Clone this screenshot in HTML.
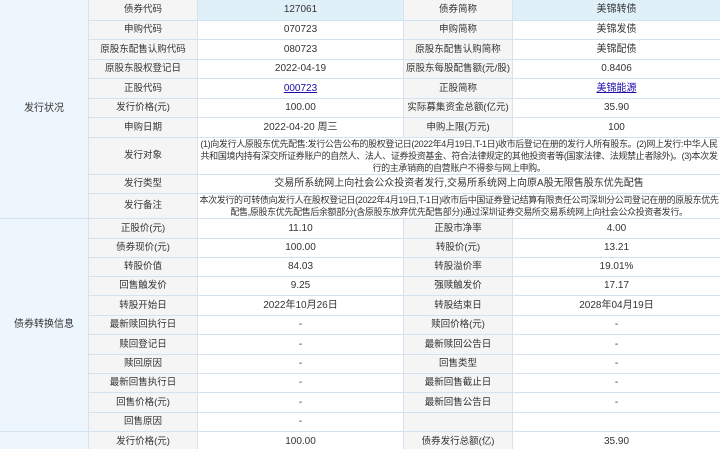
<!DOCTYPE html>
<html><head><meta charset="utf-8"><style>
html,body{margin:0;padding:0;background:#fff;width:720px;height:449px;overflow:hidden}
table{border-collapse:collapse;table-layout:fixed;width:721px;font-family:"Liberation Sans","Noto Sans CJK SC",sans-serif;font-size:10px;color:#333;margin-top:-1px;margin-left:-1px}
td{border:1px solid #d4e3ef;text-align:center;padding:0;white-space:nowrap;overflow:hidden;line-height:12px}
td.s{background:#eef6fd}
td.l{background:#f5f5f5;font-size:9.5px}
tr.h td.v{background:#dff0f9}
a{color:#1a0dab;text-decoration:underline}
td.m{line-height:12px;font-size:9px;letter-spacing:-0.35px}
</style></head><body>
<table>
<colgroup><col style="width:89px"><col style="width:109px"><col style="width:206px"><col style="width:109px"><col style="width:208px"></colgroup>
<tr class="h" style="height:21px"><td class="s" rowspan="10">发行状况</td><td class="l">债券代码</td><td class="v">127061</td><td class="l">债券简称</td><td class="v">美锦转债</td></tr>
<tr style="height:19px"><td class="l">申购代码</td><td>070723</td><td class="l">申购简称</td><td>美锦发债</td></tr>
<tr style="height:20px"><td class="l">原股东配售认购代码</td><td>080723</td><td class="l">原股东配售认购简称</td><td>美锦配债</td></tr>
<tr style="height:19px"><td class="l">原股东股权登记日</td><td>2022-04-19</td><td class="l">原股东每股配售额(元/股)</td><td>0.8406</td></tr>
<tr style="height:20px"><td class="l">正股代码</td><td><a>000723</a></td><td class="l">正股简称</td><td><a>美锦能源</a></td></tr>
<tr style="height:19px"><td class="l">发行价格(元)</td><td>100.00</td><td class="l">实际募集资金总额(亿元)</td><td>35.90</td></tr>
<tr style="height:20px"><td class="l">申购日期</td><td>2022-04-20 周三</td><td class="l">申购上限(万元)</td><td>100</td></tr>
<tr style="height:37px"><td class="l">发行对象</td><td colspan="3" class="m">(1)向发行人原股东优先配售:发行公告公布的股权登记日(2022年4月19日,T-1日)收市后登记在册的发行人所有股东。(2)网上发行:中华人民<br>共和国境内持有深交所证券账户的自然人、法人、证券投资基金、符合法律规定的其他投资者等(国家法律、法规禁止者除外)。(3)本次发<br>行的主承销商的自营账户不得参与网上申购。</td></tr>
<tr style="height:19px"><td class="l">发行类型</td><td colspan="3">交易所系统网上向社会公众投资者发行,交易所系统网上向原A股无限售股东优先配售</td></tr>
<tr style="height:24px"><td class="l">发行备注</td><td colspan="3" class="m">本次发行的可转债向发行人在股权登记日(2022年4月19日,T-1日)收市后中国证券登记结算有限责任公司深圳分公司登记在册的原股东优先<br>配售,原股东优先配售后余额部分(含原股东放弃优先配售部分)通过深圳证券交易所交易系统网上向社会公众投资者发行。</td></tr>
<tr style="height:20px"><td class="s" rowspan="11">债券转换信息</td><td class="l">正股价(元)</td><td>11.10</td><td class="l">正股市净率</td><td>4.00</td></tr>
<tr style="height:19px"><td class="l">债券现价(元)</td><td>100.00</td><td class="l">转股价(元)</td><td>13.21</td></tr>
<tr style="height:19px"><td class="l">转股价值</td><td>84.03</td><td class="l">转股溢价率</td><td>19.01%</td></tr>
<tr style="height:19px"><td class="l">回售触发价</td><td>9.25</td><td class="l">强赎触发价</td><td>17.17</td></tr>
<tr style="height:20px"><td class="l">转股开始日</td><td>2022年10月26日</td><td class="l">转股结束日</td><td>2028年04月19日</td></tr>
<tr style="height:19px"><td class="l">最新赎回执行日</td><td>-</td><td class="l">赎回价格(元)</td><td>-</td></tr>
<tr style="height:20px"><td class="l">赎回登记日</td><td>-</td><td class="l">最新赎回公告日</td><td>-</td></tr>
<tr style="height:19px"><td class="l">赎回原因</td><td>-</td><td class="l">回售类型</td><td>-</td></tr>
<tr style="height:19px"><td class="l">最新回售执行日</td><td>-</td><td class="l">最新回售截止日</td><td>-</td></tr>
<tr style="height:20px"><td class="l">回售价格(元)</td><td>-</td><td class="l">最新回售公告日</td><td>-</td></tr>
<tr style="height:19px"><td class="l">回售原因</td><td>-</td><td class="l"></td><td></td></tr>
<tr style="height:20px"><td class="s"></td><td class="l">发行价格(元)</td><td>100.00</td><td class="l">债券发行总额(亿)</td><td>35.90</td></tr>
</table>
</body></html>
